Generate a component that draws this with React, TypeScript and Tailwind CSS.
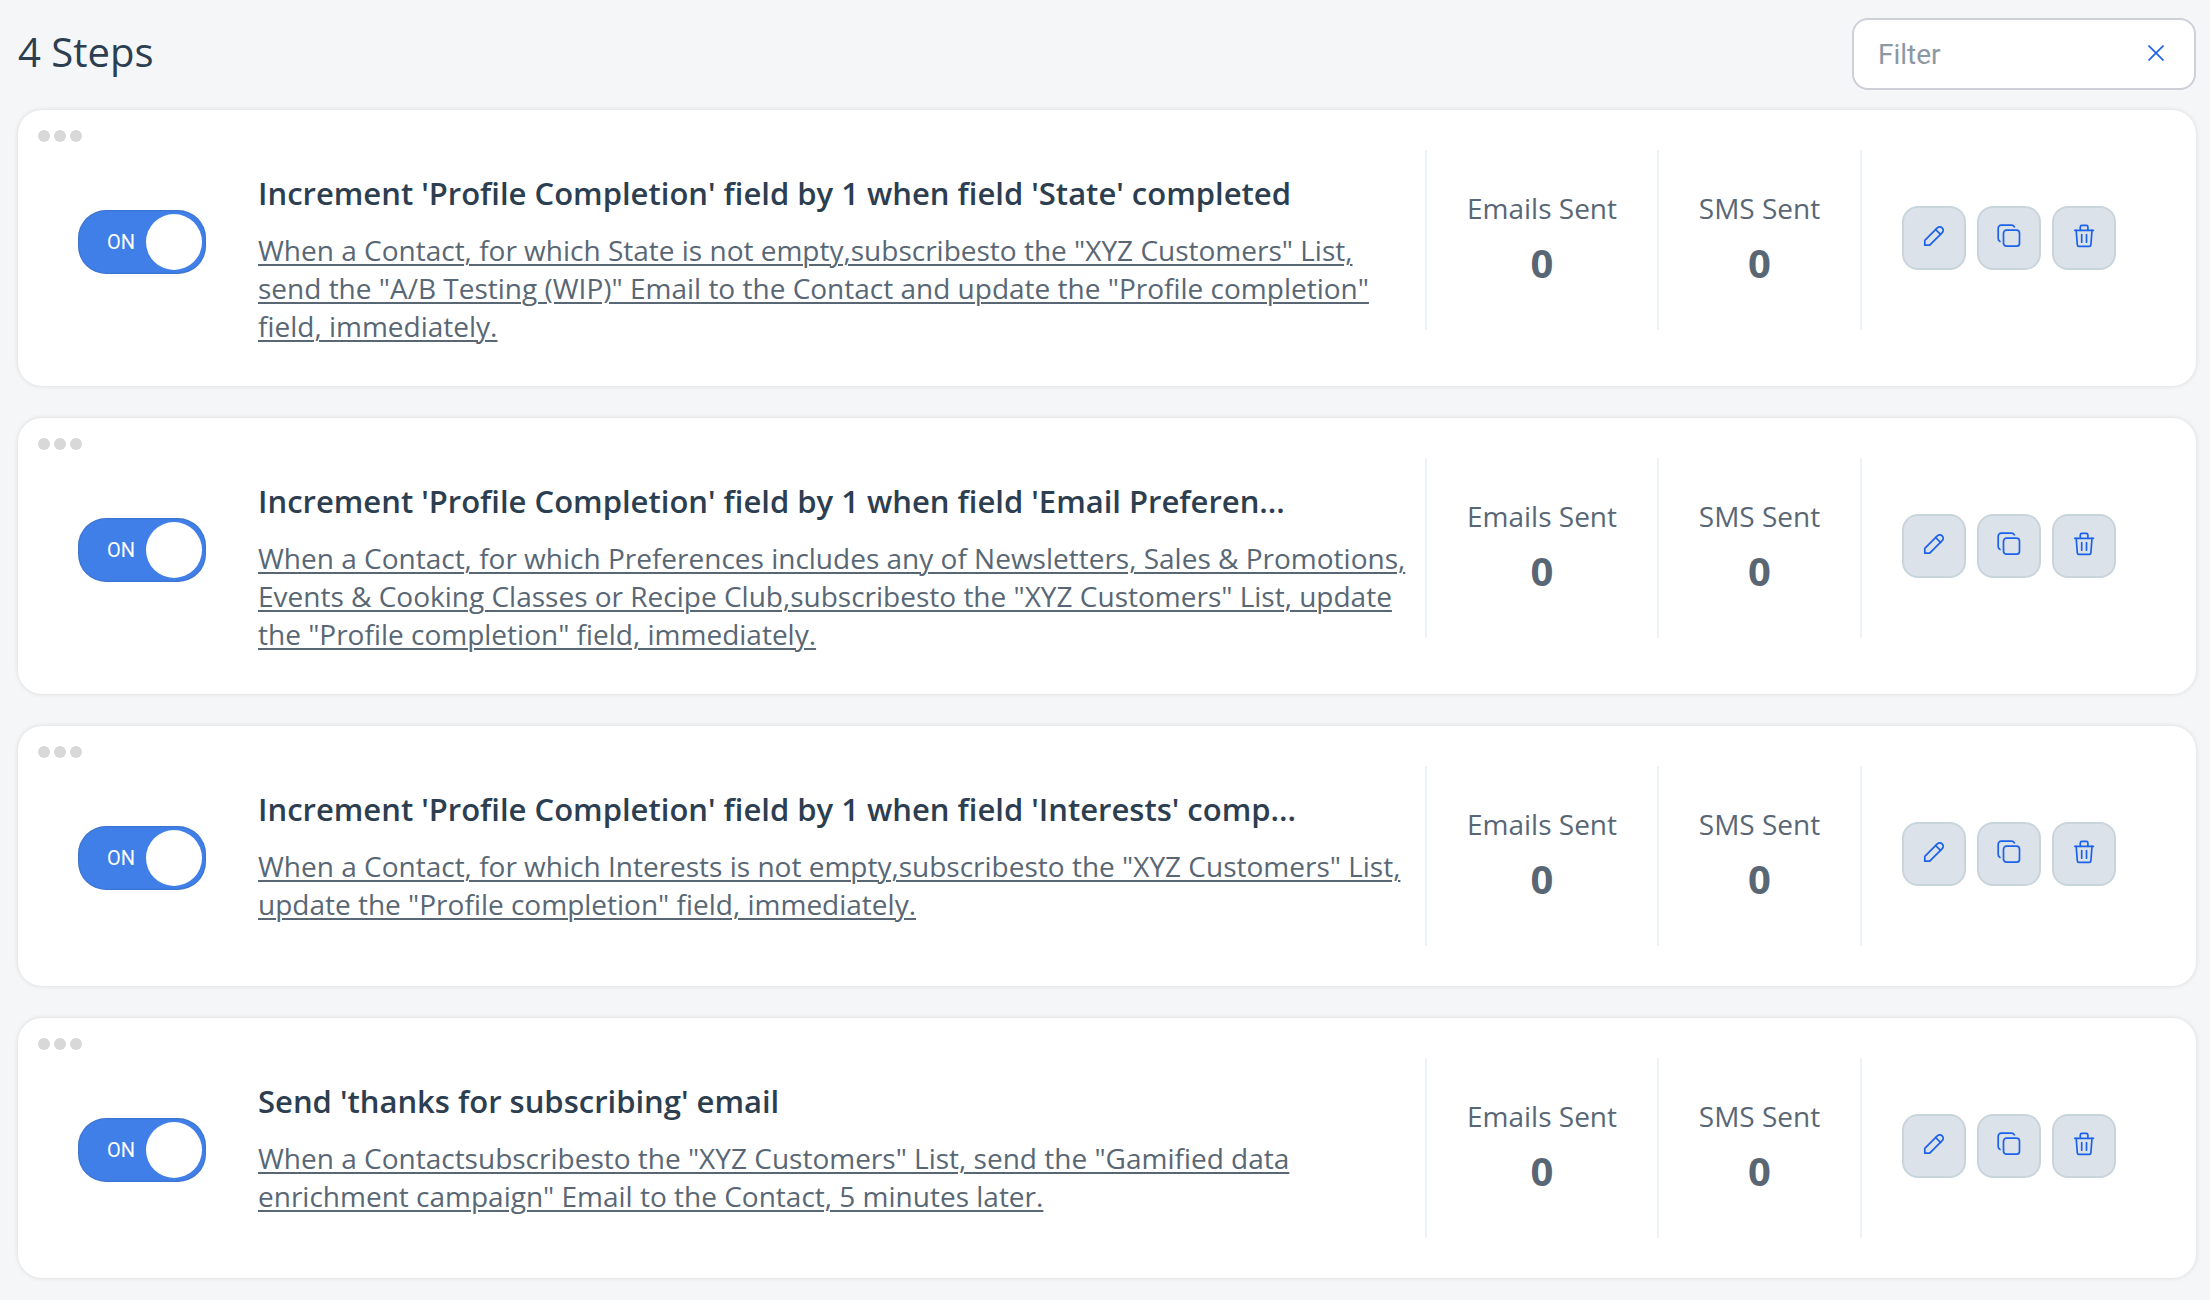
import { useState } from "react";

type Step = {
  id: string;
  title: string;
  summary: string;
  emails: number;
  sms: number;
};

const STEPS: Step[] = [
  {
    id: "state",
    title: "Increment 'Profile Completion' field by 1 when field 'State' completed",
    summary:
      'When a Contact, for which State is not empty,subscribesto the "XYZ Customers" List, send the "A/B Testing (WIP)" Email to the Contact and update the "Profile completion" field, immediately.',
    emails: 0,
    sms: 0,
  },
  {
    id: "preferences",
    title: "Increment 'Profile Completion' field by 1 when field 'Email Preferen...",
    summary:
      'When a Contact, for which Preferences includes any of Newsletters, Sales & Promotions, Events & Cooking Classes or Recipe Club,subscribesto the "XYZ Customers" List, update the "Profile completion" field, immediately.',
    emails: 0,
    sms: 0,
  },
  {
    id: "interests",
    title: "Increment 'Profile Completion' field by 1 when field 'Interests' comp...",
    summary:
      'When a Contact, for which Interests is not empty,subscribesto the "XYZ Customers" List, update the "Profile completion" field, immediately.',
    emails: 0,
    sms: 0,
  },
  {
    id: "thanks",
    title: "Send 'thanks for subscribing' email",
    summary:
      'When a Contactsubscribesto the "XYZ Customers" List, send the "Gamified data enrichment campaign" Email to the Contact, 5 minutes later.',
    emails: 0,
    sms: 0,
  },
];

const iconProps = {
  viewBox: "0 0 24 24",
  fill: "none",
  stroke: "currentColor",
  strokeWidth: 1.7,
  strokeLinecap: "round" as const,
  strokeLinejoin: "round" as const,
  className: "size-6",
  "aria-hidden": true,
};

function PencilIcon() {
  return (
    <svg {...iconProps}>
      <path d="M2.8 21.2v-4.9L15.3 3.8a3.46 3.46 0 0 1 4.9 4.9L7.7 21.2Z" />
      <path d="M13.6 5.5l4.9 4.9" />
    </svg>
  );
}

function CopyIcon() {
  return (
    <svg {...iconProps}>
      <rect x="6.5" y="6.2" width="16" height="16" rx="3" />
      <path d="M3 17.4C1.8 16.8 1.2 16 1.2 14.8V4.2a3 3 0 0 1 3-3h10.3c1.4 0 2.4.6 2.9 1.6" />
    </svg>
  );
}

function TrashIcon() {
  return (
    <svg {...iconProps}>
      <path d="M2.8 6.3h18.6" />
      <path d="M8.3 6.3V2.9c0-.9.6-1.5 1.5-1.5h4.6c.9 0 1.5.6 1.5 1.5v3.4" />
      <path d="M4.2 6.3l1.1 14.5c.1.9.8 1.5 1.6 1.5h10.4c.9 0 1.5-.6 1.6-1.5L20 6.3" />
      <path d="M9.7 10.6v7.6M14.5 10.6v7.6" />
    </svg>
  );
}

function CloseIcon() {
  return (
    <svg viewBox="0 0 16 16" fill="none" stroke="currentColor" strokeWidth="1.6" className="size-4" aria-hidden>
      <path d="M.5.5l15 15M15.5.5l-15 15" />
    </svg>
  );
}

function Toggle({ label }: { label: string }) {
  const [on, setOn] = useState(true);
  return (
    <label className="relative mt-[60px] flex h-16 w-32 shrink-0 cursor-pointer">
      <input
        type="checkbox"
        role="switch"
        className="peer sr-only"
        aria-label={label}
        checked={on}
        onChange={(e) => setOn(e.target.checked)}
      />
      <span className="flex h-16 w-32 flex-row-reverse items-center rounded-[28px] bg-gray-400 p-1 font-[Roboto,sans-serif] text-xl text-white shadow-[inset_0_0_2px_rgba(0,0,0,0.3)] peer-checked:flex-row peer-checked:bg-[#407fe7]">
        <span className="flex-1 pl-[25px]">{on ? "ON" : "OFF"}</span>
        <span className="size-14 shrink-0 rounded-full bg-white" />
      </span>
    </label>
  );
}

function Stat({ label, value, width }: { label: string; value: number; width: string }) {
  return (
    <div className={`h-[180px] shrink-0 border-l-2 border-[#edf2f9] pt-[39px] text-center text-[#596775] ${width}`}>
      <dt className="text-[28px] leading-[38px]">{label}</dt>
      <dd className="mt-2 text-[40px] leading-14 font-bold">{value}</dd>
    </div>
  );
}

function ActionButton({ label, children }: { label: string; children: React.ReactNode }) {
  return (
    <button
      type="button"
      aria-label={label}
      className="flex size-16 cursor-pointer items-center justify-center rounded-2xl border-2 border-[#c9d5dc] bg-[#dbe2e9] pb-1 text-[#1c62e8]"
    >
      {children}
    </button>
  );
}

function StepCard({ step }: { step: Step }) {
  return (
    <li className="rounded-3xl bg-white pt-5 pr-20 pb-10 shadow-[0_0_5px_rgba(0,0,0,0.12)]">
      <div className="ml-5 flex gap-1" aria-hidden>
        <span className="size-3 rounded-full bg-[#d8d8d8]" />
        <span className="size-3 rounded-full bg-[#d8d8d8]" />
        <span className="size-3 rounded-full bg-[#d8d8d8]" />
      </div>
      <div className="mt-2 ml-[60px] flex items-start">
        <Toggle label={step.title} />
        <div className="ml-[52px] min-w-0 flex-1 pt-[23px] pr-1 pb-px">
          <h2 className="truncate text-[31px] leading-10 font-semibold text-[#2c3e50]">{step.title}</h2>
          <p className="mt-[18px] text-[28px] leading-[38px]">
            <a href="#" className="text-[#596775] underline decoration-2 underline-offset-3">
              {step.summary}
            </a>
          </p>
        </div>
        <dl className="flex shrink-0">
          <Stat label="Emails Sent" value={step.emails} width="w-[232px]" />
          <Stat label="SMS Sent" value={step.sms} width="w-[203px]" />
        </dl>
        <div className="flex h-[180px] shrink-0 gap-[11px] border-l-2 border-[#edf2f9] pt-14 pl-10">
          <ActionButton label="Edit step">
            <PencilIcon />
          </ActionButton>
          <ActionButton label="Duplicate step">
            <CopyIcon />
          </ActionButton>
          <ActionButton label="Delete step">
            <TrashIcon />
          </ActionButton>
        </div>
      </div>
    </li>
  );
}

export default function App() {
  const [filter, setFilter] = useState("");
  const shown = STEPS.filter((s) => s.title.toLowerCase().includes(filter.toLowerCase()));

  return (
    <main className="min-h-screen bg-[#f4f6f8] pt-[18px] pr-[14px] pb-[22px] pl-[18px] font-['Open_Sans',sans-serif]">
      <header className="flex items-center justify-between">
        <h1 className="pb-1 text-[40px] leading-14 text-[#2c3e50]">{shown.length} Steps</h1>
        <div className="flex h-[72px] w-[344px] items-center rounded-2xl border-2 border-[#cdd0d6] bg-white pr-[22px] pl-6">
          <input
            type="text"
            aria-label="Filter"
            placeholder="Filter"
            value={filter}
            onChange={(e) => setFilter(e.target.value)}
            className="min-w-0 flex-1 bg-transparent pt-0.5 font-[Roboto,sans-serif] text-[28px] leading-9 text-[#2c3e50] outline-none placeholder:text-[#8d98a5]"
          />
          <button
            type="button"
            aria-label="Clear filter"
            onClick={() => setFilter("")}
            className="flex size-8 cursor-pointer items-center justify-center pb-0.5 text-[#1c62e8]"
          >
            <CloseIcon />
          </button>
        </div>
      </header>
      <ul className="mt-5 flex flex-col gap-8">
        {shown.map((step) => (
          <StepCard key={step.id} step={step} />
        ))}
      </ul>
    </main>
  );
}
